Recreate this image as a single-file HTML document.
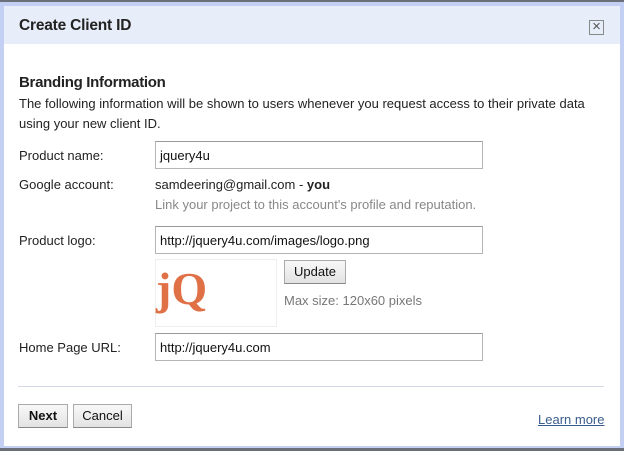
<!DOCTYPE html>
<html><head><style>
*{margin:0;padding:0;box-sizing:border-box}
body{width:624px;height:451px;background:#c3d0f3;font-family:"Liberation Sans",Arial,sans-serif;font-size:13px;color:#222;position:relative;overflow:hidden}
.top{position:absolute;left:0;top:0;width:624px;height:2px;background:#6b6f78}
.bot{position:absolute;left:0;bottom:0;width:624px;height:3px;background:#6b6f78}
.dlg{position:absolute;left:4px;top:6px;width:616px;height:440px;background:#fff}
.hdr{position:absolute;left:0;top:0;width:616px;height:38px;background:#e8eef9}
.t{position:absolute;white-space:nowrap}
.inp{position:absolute;left:155px;width:328px;height:28px;border:1px solid #b5b5b5;border-top-color:#999;padding:6px 4px;font-size:13px;color:#111}
.btn{position:absolute;height:24px;border:1px solid #aaa;border-bottom-color:#888;background:linear-gradient(#f8f8f8,#e3e3e3);font-size:13px;text-align:center;line-height:22px;color:#111}
</style></head><body>
<div class="top"></div>
<div class="dlg">
<div class="hdr"></div>
<div class="t" style="left:15px;top:11px;font-size:15.5px;font-weight:bold;color:#222;letter-spacing:-0.2px">Create Client ID</div>
<div style="position:absolute;left:585px;top:14px;width:15px;height:15px;border:1px solid #888;font-size:15px;line-height:12px;text-align:center;color:#555">×</div>
<div class="t" style="left:15px;top:68px;font-size:15px;font-weight:bold;letter-spacing:-0.3px">Branding Information</div>
<div class="t" style="left:15px;top:88px;line-height:20px">The following information will be shown to users whenever you request access to their private data<br>using your new client ID.</div>
</div>
<div class="t" style="left:19px;top:148px">Product name:</div>
<div class="inp" style="top:141px">jquery4u</div>
<div class="t" style="left:19px;top:177px">Google account:</div>
<div class="t" style="left:155px;top:177px">samdeering@gmail.com - <b>you</b></div>
<div class="t" style="left:155px;top:197px;color:#888">Link your project to this account's profile and reputation.</div>
<div class="t" style="left:19px;top:233px">Product logo:</div>
<div class="inp" style="top:226px">http://jquery4u.com/images/logo.png</div>
<div style="position:absolute;left:155px;top:259px;width:122px;height:68px;border:1px solid #eee"></div>
<div class="t" style="left:156px;top:264px;font-family:'Liberation Serif',serif;font-weight:bold;font-size:46px;color:#e07045;line-height:50px">jQ</div>
<div class="btn" style="left:284px;top:260px;width:62px">Update</div>
<div class="t" style="left:284px;top:293px;color:#777">Max size: 120x60 pixels</div>
<div class="t" style="left:19px;top:340px">Home Page URL:</div>
<div class="inp" style="top:333px">http://jquery4u.com</div>
<div style="position:absolute;left:18px;top:386px;width:586px;height:1px;background:#d4d8e4"></div>
<div class="btn" style="left:18px;top:404px;width:50px;font-weight:bold">Next</div>
<div class="btn" style="left:73px;top:404px;width:59px">Cancel</div>
<div class="t" style="left:538px;top:412px;color:#3a5c8c;text-decoration:underline">Learn more</div>
<div class="bot"></div>
</body></html>
